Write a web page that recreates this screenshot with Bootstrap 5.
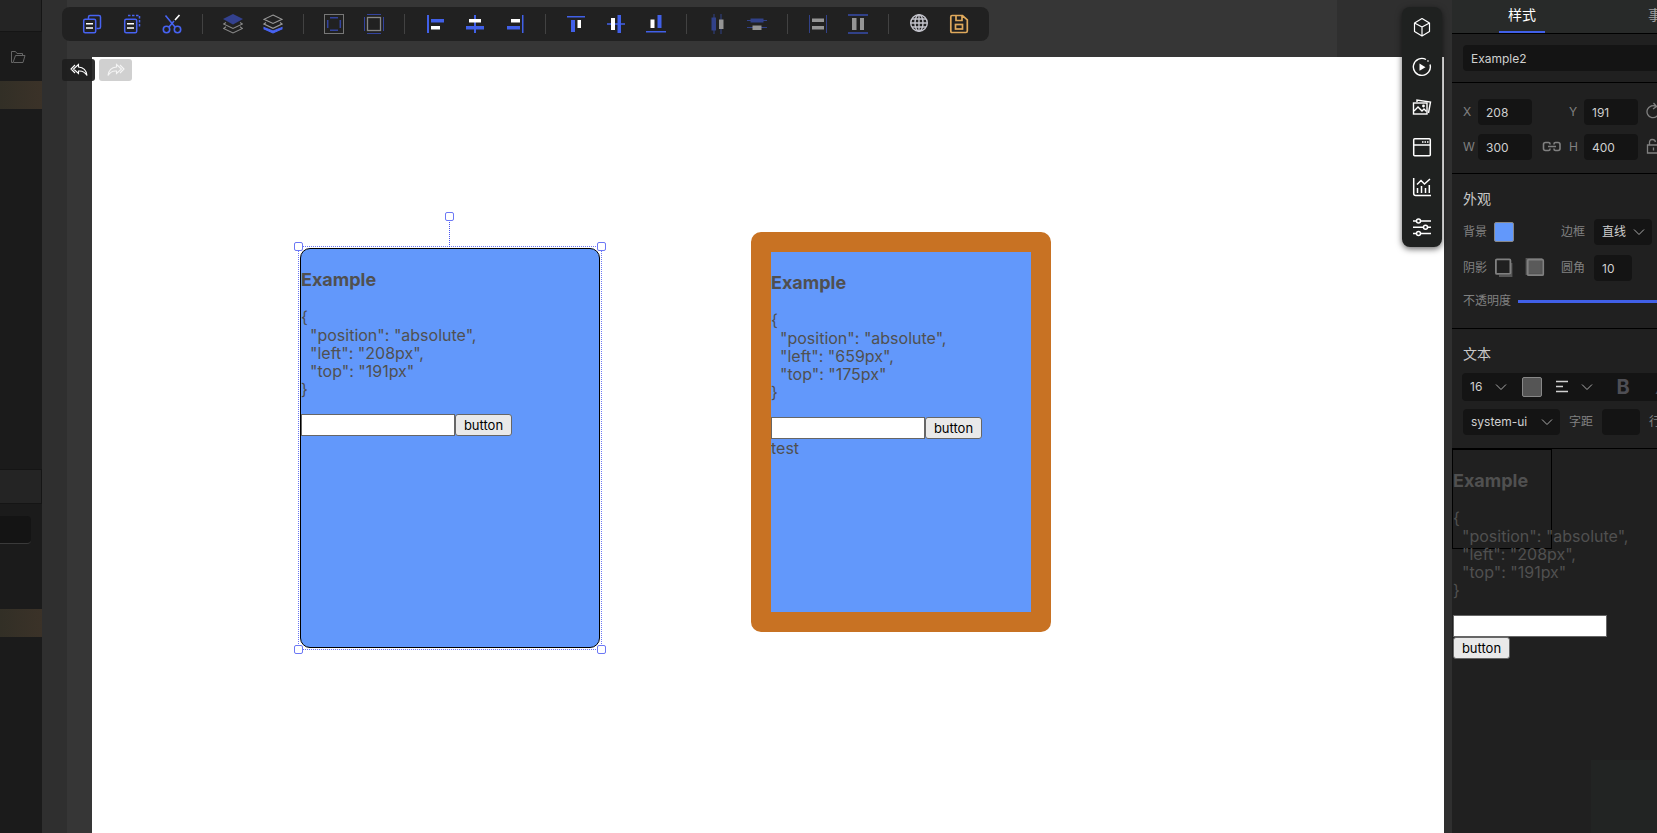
<!DOCTYPE html>
<html lang="zh-CN">
<head>
<meta charset="utf-8">
<meta name="viewport" content="width=device-width, initial-scale=1">
<title>Editor</title>
<link href="https://cdn.jsdelivr.net/npm/bootstrap@5.3.0/dist/css/bootstrap.min.css" rel="stylesheet">
<style>
  :root { --accent: #4160e8; --field: #141414; --panel: #202020; --muted: #808080; }
  body { font-family: Inter, "Noto Sans CJK SC", sans-serif; font-size: 12px; line-height: 18px; background: #2f2f2f; color: #d0d0d0; }
  svg { display: block; }
  button { font-family: inherit; }
  .icon-btn { border: 0; padding: 0; background: none; color: inherit; flex: none; }

  /* left sidebar */
  .side { width: 42px; background: #1b1b1b; }
  .side-head { height: 32px; background: #242424; border: solid #151515; border-width: 0 1px 1px 0; }
  .side-tools { height: 49px; padding: 0 16px 0 10px; color: #666; }
  .side-band { height: 28px; background: linear-gradient(90deg, #322f26, #3b3228); }
  .side-list { height: 360px; }
  .side-title { height: 35px; background: #242424; border: 1px solid #151515; border-left: 0; }
  .side-field { width: 31px; height: 28px; background: var(--field); border: 0; border-bottom: 1px solid #3a3a3a; border-radius: 0 4px 4px 0; margin: 12px 0 65px; }

  /* work area */
  .work { min-width: 0; padding: 0 8px 0 25px; }
  .stage { padding: 57px 0 0 25px; background: linear-gradient(90deg, #363636 calc(100% - 107px), #2f2f2f 0); }
  .paper { background: #fff; }
  .toolbar { left: 20px; top: 7px; height: 34px; padding: 0 20px; gap: 20px; background: #212121; border-radius: 8px; z-index: 3; }
  .toolbar .rule { width: 1px; height: 20px; background: #424242; }
  .dim { opacity: .52; }
  .history { left: 20px; top: 59px; gap: 4px; z-index: 3; }
  .history button { width: 33px; height: 22px; border-radius: 3px; background: rgba(30,30,30,.93); color: #fff; }
  .history button:disabled { background: #d0d0d0; color: #f4f4f4; }
  .dock { right: 10px; top: 7px; width: 40px; padding: 10px; gap: 20px; background: #1f2120; border-radius: 8px; color: #fff; box-shadow: 0 2px 6px rgba(0,0,0,.6); z-index: 3; }

  /* widgets on the canvas */
  .widget { width: 300px; height: 400px; border-radius: 10px; background: #6298fb; }
  .demo { color: #505050; font-size: 16px; line-height: 18px; }
  .demo h3 { font-size: 18px; line-height: 22px; font-weight: 700; margin: 20px 0 17px; }
  .demo pre { font: inherit; margin: 0 0 16px; overflow: visible; }
  .demo input { width: 154px; height: 22px; border: 1px solid #666; background: #fff; padding: 1px 2px; }
  .demo button { width: 57px; height: 22px; border: 1px solid #666; border-radius: 3px; background: #e9e9e9; color: #000; font-size: 13px; line-height: 18px; padding: 0; }
  .w-one { left: 208px; top: 191px; border: 1px solid #000; }
  .w-two { left: 659px; top: 175px; border: 20px solid #c87223; }
  .selection { inset: -3px; border: 1px dotted #6c78f5; }
  .handle { width: 9px; height: 9px; border: 1px solid #6c78f5; border-radius: 2px; background: #fff; margin: -5px 0 0 -5px; }
  .handle.start-100 { margin-left: -4px; }
  .handle.top-100 { margin-top: -4px; }
  .handle.turn { top: -30px; }
  .stem { left: 50%; bottom: 100%; height: 30px; margin-left: -1px; border-left: 1px dotted #4854f0; }

  /* property panel */
  .props { width: 205px; background: var(--panel); }
  .props-body { width: 280px; }
  .props section { border-bottom: 1px solid #000; padding-left: 11px; }
  .tabs { height: 34px; background: #282a29; border-bottom: 1px solid #000; }
  .tabs a { width: 140px; font-size: 14px; line-height: 30px; color: #a0a0a0; text-decoration: none; text-align: center; }
  .tabs a.active { color: #fff; }
  .tabs a.active::after { content: ""; display: block; width: 46px; height: 2px; margin: 1px auto 0; background: var(--accent); }
  .fld { height: 26px; border: 0; border-radius: 4px; background-color: var(--field); color: #d0d0d0; font-size: 12px; padding: 0 8px; flex: none; }
  select.fld { appearance: none; background-repeat: no-repeat; background-position: right 7px center; background-image: url("data:image/svg+xml,%3Csvg xmlns='http://www.w3.org/2000/svg' width='12' height='8' fill='none' stroke='%23aaa'%3E%3Cpath d='M1 1.500 6 6.500l5-5'/%3E%3C/svg%3E"); }
  .w54 { width: 54px; } .w58 { width: 58px; } .w38 { width: 38px; } .w97 { width: 97px; }
  .lbl { color: var(--muted); flex: none; }
  .l15 { width: 15px; } .l31 { width: 31px; } .l33 { width: 33px; } .l55 { width: 55px; }
  .props h2 { font-size: 14px; line-height: 20px; font-weight: 400; margin: 0; color: #c8c8c8; }
  .swatch { width: 20px; height: 20px; border: 1px solid #888; border-radius: 2px; background: #6298fb; padding: 0; flex: none; }
  .swatch.ink { background: #555; }
  .prow { display: flex; align-items: center; height: 26px; }
  .naming { padding: 11px 0; }
  .geometry { padding: 16px 0 13px; }
  .geometry .prow + .prow { margin-top: 9px; }
  .geometry .col-two { margin-left: 37px; }
  .geometry .link-size { margin: 0 7px 0 10px; }
  .geometry .rest { margin-left: 7px; }
  .looks { padding-top: 15px; height: 155px; }
  .looks h2 { margin-bottom: 10px; }
  .looks .prow + .prow { margin-top: 10px; }
  .looks .prow:last-child { margin-top: 7px; }
  .second { margin-left: 47px; }
  .inner { margin-left: 11px; }
  .third { margin-left: 16px; }
  .opacity-range { appearance: none; width: 200px; height: 3px; background: var(--accent); }
  .opacity-range::-webkit-slider-thumb { appearance: none; width: 10px; height: 10px; border-radius: 50%; background: #fff; }
  .texts { padding-top: 15px; height: 120px; }
  .texts h2 { margin-bottom: 9px; }
  .texts .prow { margin-top: 8px; }
  .textbar { height: 28px; background: var(--field); border-radius: 4px; margin-left: -1px; }
  .textbar .fld { width: 52px; }
  .textbar .swatch { margin-left: 8px; }
  .align-pick { gap: 13px; margin-left: 14px; }
  .glyph { width: 20px; margin-left: 20px; font-size: 20px; color: #4e4e54; }
  .gap9 { margin-left: 9px; }
  .preview { width: 100px; height: 100px; border: 1px solid #000; }
  .corner { right: 0; bottom: 0; width: 66px; height: 73px; background: #222423; }
</style>
</head>
<body class="d-flex vh-100 overflow-hidden">

<aside class="side flex-shrink-0 overflow-hidden">
  <div class="side-head"></div>
  <div class="side-tools d-flex align-items-center">
    <button class="icon-btn" aria-label="打开"><svg width="16" height="14" fill="none" stroke="currentColor"><path d="M3.500 12.500h9.500l2-7H5.500l-2.500 7h-1.500v-11h4l1.500 2h5.500v2"/></svg></button>
  </div>
  <div class="side-band"></div>
  <div class="side-list"></div>
  <div class="side-title"></div>
  <input class="side-field d-block" aria-label="名称">
  <div class="side-band"></div>
</aside>

<main class="work flex-grow-1 position-relative">
  <div class="toolbar position-absolute d-flex align-items-center">
    <button class="icon-btn" aria-label="复制"><svg width="20" height="20" fill="none" stroke="#4763f2" stroke-width="1.500"><path d="M6.500 5V3q0-1.500 1.500-1.500h9q1.500 0 1.500 1.500v10q0 1.500-1.500 1.500h-2.500"/><rect x="1.700" y="5.200" width="12" height="13.500" rx="1.500"/><path d="M4 9.700h7M4 14h7" stroke="#fff"/></svg></button>
    <button class="icon-btn" aria-label="粘贴"><svg width="20" height="20" fill="none" stroke="#4763f2" stroke-width="1.500"><path d="M6 1.500h11.500v12" stroke-dasharray="2.500 1.500"/><rect x="2.700" y="5.200" width="12" height="13.500" rx="1.500"/><path d="M5 9.700h7M5 14h7" stroke="#fff"/></svg></button>
    <button class="icon-btn" aria-label="剪切"><svg width="20" height="20" fill="none" stroke="#4763f2" stroke-width="1.600"><circle cx="4.500" cy="15.500" r="3.200"/><circle cx="15.500" cy="15.500" r="3.200"/><path d="M3.500 1.500 13 13M7 13l5-6"/><path d="m13 6 4.500-5" stroke="#fff"/></svg></button>
    <span class="rule"></span>
    <button class="icon-btn" aria-label="置顶"><svg width="20" height="20" fill="none" stroke="#8a8a8a" stroke-width="1.100"><path d="m10 0 10 5-10 5.500L0 5z" fill="#33418f" stroke="none"/><path d="m3 8.500-2.500 1.500L10 14.500l9.500-4.500L17 8.500M3 12.800.5 14.500 10 19l9.500-4.500-2.500-1.700"/></svg></button>
    <button class="icon-btn" aria-label="置底"><svg width="20" height="20" fill="none" stroke="#999" stroke-width="1.100"><path d="m10 1 9 4.300-9 4.200-9-4.200zM3 8.500 1 10l9 4.300 9-4.300-2-1.500"/><path d="m1 13.500 9 3.500 9-3.500v1.500l-9 4-9-4z" fill="#4763f2" stroke="#4763f2"/></svg></button>
    <span class="rule"></span>
    <button class="icon-btn" aria-label="组合"><svg width="20" height="20" fill="none" stroke="#777"><rect x=".5" y=".5" width="19" height="19"/><path d="M6 3.700h8M6 16.300h8M3.700 6v8M16.300 6v8" stroke="#33439e" stroke-width="1.500"/></svg></button>
    <button class="icon-btn" aria-label="拆分"><svg width="20" height="20" fill="none" stroke="#888"><rect x="3.500" y="3.500" width="13" height="13" stroke-width="1.300"/><path d="M3 .5h14M3 19.500h14M.5 3v14M19.500 3v14" stroke="#33439e"/></svg></button>
    <span class="rule"></span>
    <button class="icon-btn" aria-label="左对齐"><svg width="20" height="20" fill="#4160e8"><path d="M2 1h2v18H2zM6 5h13v3.500H6z"/><path d="M6 12h9v3.500H6z" fill="#fff"/></svg></button>
    <button class="icon-btn" aria-label="水平居中"><svg width="20" height="20" fill="#4160e8"><path d="M9 1h2v18H9zM1 12h18v3.500H1z"/><path d="M4 5h12v3.500H4z" fill="#fff"/></svg></button>
    <button class="icon-btn" aria-label="右对齐"><svg width="20" height="20" fill="#4160e8"><path d="M17 1h1.500v18H17zM2 12h13v3.500H2z"/><path d="M6 5h9v3.500H6z" fill="#fff"/></svg></button>
    <span class="rule"></span>
    <button class="icon-btn" aria-label="顶对齐"><svg width="20" height="20" fill="#4160e8"><path d="M1 2h18v1.500H1zM5 6h4v12H5z"/><path d="M11.500 6H15v8h-3.500z" fill="#fff"/></svg></button>
    <button class="icon-btn" aria-label="垂直居中"><svg width="20" height="20" fill="#4160e8"><path d="M1 9.200h18v1.600H1zM11.500 1h3.500v18h-3.500z"/><path d="M5 4h4v12H5z" fill="#fff"/></svg></button>
    <button class="icon-btn" aria-label="底对齐"><svg width="20" height="20" fill="#4160e8"><path d="M0 17h20v1.600H0zM11.500 1h4v13h-4z"/><path d="M4.500 5.500h4V14h-4z" fill="#fff"/></svg></button>
    <span class="rule"></span>
    <button class="icon-btn dim" aria-label="等宽"><svg width="20" height="20" fill="#4160e8"><path d="M6.500 0h1v20h-1zM4.500 3.500h4.500v13H4.500zM13.500 0h1v20h-1z"/><path d="M12 5.500h4.500V15H12z" fill="#fff"/></svg></button>
    <button class="icon-btn dim" aria-label="等高"><svg width="20" height="20" fill="#4160e8"><path d="M0 6h20v1H0zM3.500 4.500h13v4h-13zM0 13h20v1H0z"/><path d="M5.500 11.500h9v4.500h-9z" fill="#fff"/></svg></button>
    <span class="rule"></span>
    <button class="icon-btn dim" aria-label="纵向分布"><svg width="20" height="20" fill="#4160e8"><path d="M1 1h1v18H1zM18 1h1v18h-1z"/><path d="M4 4.500h12V8H4zM4 12h12v3.500H4z" fill="#fff"/></svg></button>
    <button class="icon-btn dim" aria-label="横向分布"><svg width="20" height="20" fill="#4160e8"><path d="M0 0h20v2H0zM0 18h20v2H0z"/><path d="M4 4h4.500v12H4zM12 4h4v12h-4z" fill="#fff"/></svg></button>
    <span class="rule"></span>
    <button class="icon-btn" aria-label="预览"><svg width="20" height="20" fill="none" stroke="#c4c4cc" stroke-width="1.400"><circle cx="10" cy="9" r="8.300"/><ellipse cx="10" cy="9" rx="4" ry="8.300"/><path d="M10 1v16M2 9h16M3 5h14M3 13h14"/></svg></button>
    <button class="icon-btn" aria-label="保存"><svg width="20" height="20" fill="none" stroke="#dfa95c" stroke-width="1.700"><path d="M3 1.500h10.500l4.800 4.300V17q0 1.500-1.500 1.500H3Q1.800 18.500 1.800 17V3Q1.800 1.500 3 1.500zM7 2v4.500h6V2"/><rect x="6.500" y="10.500" width="7" height="4.500"/></svg></button>
  </div>

  <div class="history position-absolute d-flex">
    <button class="icon-btn d-flex align-items-center justify-content-center" aria-label="撤销"><svg width="18" height="14" fill="none" stroke="currentColor" stroke-width="1.100"><path d="M8.500 1.500 3.500 6l5 4.500V8q5.500-.5 8.500 4.500Q16 4.500 8.500 4zM5 2 1 6l4 4"/></svg></button>
    <button class="icon-btn d-flex align-items-center justify-content-center" aria-label="重做" disabled><svg width="18" height="14" fill="none" stroke="currentColor" stroke-width="1.100"><path d="m9.500 1.500 5 4.500-5 4.500V8Q4 7.500 1 12.500 2 4.500 9.500 4zM13 2l4 4-4 4"/></svg></button>
  </div>

  <div class="stage h-100 d-flex">
    <div class="paper flex-grow-1 position-relative">
      <div class="widget demo w-one position-absolute">
        <h3>Example</h3>
<pre>{
  "position": "absolute",
  "left": "208px",
  "top": "191px"
}</pre>
        <div class="d-flex"><input aria-label="Example input"><button>button</button></div>
        <div class="selection position-absolute">
          <span class="stem position-absolute"></span>
          <span class="handle position-absolute top-0 start-0"></span>
          <span class="handle position-absolute top-0 start-100"></span>
          <span class="handle position-absolute top-100 start-0"></span>
          <span class="handle position-absolute top-100 start-100"></span>
          <span class="handle turn position-absolute start-50"></span>
        </div>
      </div>
      <div class="widget demo w-two position-absolute">
        <h3>Example</h3>
<pre>{
  "position": "absolute",
  "left": "659px",
  "top": "175px"
}</pre>
        <div class="d-flex"><input aria-label="Example input"><button>button</button></div>
        <div>test</div>
      </div>
    </div>
  </div>

  <div class="dock position-absolute d-flex flex-column">
    <button class="icon-btn" aria-label="组件"><svg width="20" height="20" fill="none" stroke="currentColor" stroke-width="1.200" stroke-linejoin="round"><path d="m10 1.500 7.500 4.500v8.500L10 19l-7.500-4.500V6zM2.500 6l7.500 4 7.500-4M10 10v9"/></svg></button>
    <button class="icon-btn" aria-label="媒体"><svg width="20" height="20" fill="none" stroke="currentColor" stroke-width="1.400"><path d="M14 2.500A8.500 8.500 0 1 0 18 7.500M15.500 3.500l1 1"/><path d="m7.500 6.500 6 3.700-6 3.600z" fill="currentColor" stroke="none"/></svg></button>
    <button class="icon-btn" aria-label="图片"><svg width="20" height="20" fill="none" stroke="currentColor" stroke-width="1.400"><path d="M5 5V3l13.500 2-2 11"/><rect x="1.500" y="6" width="13.500" height="11"/><path d="m2 14 4-4 4 4 2-2 2.500 2.500"/><circle cx="11.500" cy="9" r=".7"/></svg></button>
    <button class="icon-btn" aria-label="页面"><svg width="20" height="20" fill="none" stroke="currentColor" stroke-width="1.500"><rect x="1.700" y="1.700" width="16.600" height="17" rx="1"/><path d="M2 8h16"/><path d="M10 5h6.500" stroke-dasharray="1.500 1"/></svg></button>
    <button class="icon-btn" aria-label="图表"><svg width="20" height="20" fill="none" stroke="currentColor" stroke-width="1.500"><path d="M1.700 1v15.500q0 2 2 2H19M5.500 16v-5M9.500 16V9M13.500 16v-5M17.300 16V8M5 7.500l4-4 3.500 3.500L18 2"/></svg></button>
    <button class="icon-btn" aria-label="设置"><svg width="20" height="20" fill="#1f2120" stroke="currentColor" stroke-width="1.500"><path d="M1 4h18M1 10.200h18M1 16.500h18"/><circle cx="6.500" cy="4" r="2"/><circle cx="13.500" cy="10.200" r="2"/><circle cx="6.500" cy="16.500" r="2"/></svg></button>
  </div>
</main>

<aside class="props flex-shrink-0 overflow-hidden position-relative">
  <div class="props-body">
    <nav class="tabs d-flex">
      <a class="active" href="#">样式</a>
      <a href="#">事件</a>
    </nav>
    <section class="naming">
      <div class="prow"><input class="fld w-100" aria-label="名称" value="Example2"></div>
    </section>
    <section class="geometry">
      <div class="prow">
        <label class="lbl l15" for="px">X</label><input class="fld w54" id="px" value="208">
        <label class="lbl l15 col-two" for="py">Y</label><input class="fld w54" id="py" value="191">
        <button class="icon-btn lbl rest" aria-label="旋转"><svg width="20" height="20" fill="none" stroke="currentColor" stroke-width="1.300"><path d="M11 4.500A6 6 0 1 0 14 10M8.500 1l3 3.500L8 7"/></svg></button>
      </div>
      <div class="prow">
        <label class="lbl l15" for="pw">W</label><input class="fld w54" id="pw" value="300">
        <button class="icon-btn lbl link-size" aria-label="锁定比例"><svg width="20" height="12" fill="none" stroke="currentColor" stroke-width="1.600"><path d="M8 3.500V3q0-1.500-1.500-1.500h-3Q1.500 1.500 1.500 3.500v4q0 2 2 2h3Q8 9.500 8 8v-.5M12 3.500V3q0-1.500 1.500-1.500h2.500q2 0 2 2v4q0 2-2 2h-2.500Q12 9.500 12 8v-.5M6 5.500h8"/></svg></button>
        <label class="lbl l15" for="ph">H</label><input class="fld w54" id="ph" value="400">
        <button class="icon-btn lbl rest" aria-label="锁定"><svg width="20" height="20" fill="none" stroke="currentColor" stroke-width="1.300"><path d="M2.500 8h12v8h-12zM4.500 8V5.500Q4.500 2.500 7.500 2.500q2.500 0 3 2.500M8.500 10.500v3"/></svg></button>
      </div>
    </section>
    <section class="looks">
      <h2>外观</h2>
      <div class="prow">
        <span class="lbl l31">背景</span><button class="swatch" aria-label="背景颜色"></button>
        <label class="lbl l33 second" for="bd">边框</label>
        <select class="fld w58" id="bd"><option>直线</option></select>
      </div>
      <div class="prow">
        <span class="lbl l31">阴影</span>
        <button class="icon-btn lbl" aria-label="外阴影"><svg width="20" height="20" fill="none" stroke="currentColor" stroke-width="1.800"><path d="M17.500 5v13H5" stroke="#555" stroke-width="1.800"/><rect x="1.900" y="1.400" width="14.500" height="14.500" rx="1"/></svg></button>
        <button class="icon-btn lbl inner" aria-label="内阴影"><svg width="20" height="20" fill="none" stroke="currentColor" stroke-width="1.800"><path d="M1.500 1h15v15h-15z" fill="#5a5a5a" stroke="#555"/><rect x="2.700" y="1.700" width="15.500" height="15.500" rx="1"/></svg></button>
        <label class="lbl l33 third" for="rd">圆角</label><input class="fld w38" id="rd" value="10">
      </div>
      <div class="prow"><label class="lbl l55" for="op">不透明度</label><input class="opacity-range" id="op" type="range" value="100"></div>
    </section>
    <section class="texts">
      <h2>文本</h2>
      <div class="textbar d-flex align-items-center">
        <select class="fld" aria-label="字号"><option>16</option></select>
        <button class="swatch ink" aria-label="文字颜色"></button>
        <button class="icon-btn align-pick d-flex align-items-center" aria-label="对齐"><svg width="12" height="14" fill="none" stroke="currentColor" stroke-width="1.300"><path d="M0 1.500h12M0 6.500h7M0 11.500h12"/></svg><svg width="12" height="8" fill="none" stroke="#aaa"><path d="M1 1.500 6 6.500l5-5"/></svg></button>
        <button class="icon-btn glyph fw-bold" aria-label="粗体">B</button>
        <button class="icon-btn glyph fst-italic" aria-label="斜体">A</button>
      </div>
      <div class="prow">
        <select class="fld w97" aria-label="字体"><option>system-ui</option></select>
        <label class="lbl l33 gap9" for="ls">字距</label><input class="fld w38" id="ls">
        <label class="lbl l33 gap9" for="lh">行高</label><input class="fld w38" id="lh">
      </div>
    </section>
    <div class="preview demo">
      <h3>Example</h3>
<pre>{
  "position": "absolute",
  "left": "208px",
  "top": "191px"
}</pre>
      <input class="d-block" aria-label="Example input"><button class="d-block">button</button>
    </div>
  </div>
  <div class="corner position-absolute"></div>
</aside>

<script src="https://cdn.jsdelivr.net/npm/bootstrap@5.3.0/dist/js/bootstrap.bundle.min.js"></script>
</body>
</html>
